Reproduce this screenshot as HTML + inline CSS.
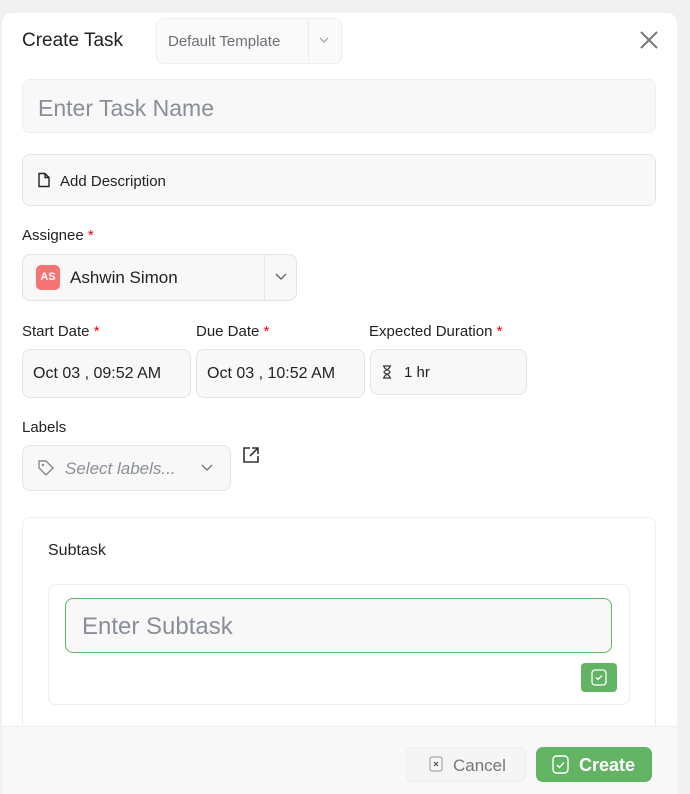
<!DOCTYPE html>
<html><head><style>
*{box-sizing:border-box;margin:0;padding:0}
html,body{width:690px;height:794px;overflow:hidden}
body{background:#f1f1f1;font-family:"Liberation Sans",sans-serif;position:relative;color:#222}
.m{position:absolute;left:2px;top:13px;width:675px;height:781px;background:#fff;border-radius:10px 10px 0 0;overflow:hidden}
.a{position:absolute}
.box{position:absolute;background:#f8f8f8;border:1px solid #e4e4e4;border-radius:8px}
.lbl{position:absolute;font-size:15px;color:#222}
.st{color:#e00}
</style></head><body>
<div class="m">
<div class="a" style="left:20px;top:17px;font-size:19px;color:#222">Create Task</div>
<div class="box" style="left:154px;top:5px;width:186px;height:46px;background:#fafafa;border-color:#eee"></div>
<div class="a" style="left:166px;top:20px;font-size:15px;color:#6b6f78">Default Template</div>
<div class="a" style="left:306px;top:6px;width:1px;height:44px;background:#eee"></div>
<svg class="a" style="left:316px;top:22px" width="12" height="10"><path d="M2 3l4 4 4-4" stroke="#aaa" fill="none" stroke-width="1.3"/></svg>
<svg class="a" style="left:637px;top:17px" width="20" height="20"><path d="M2 2l16 16M18 2L2 18" stroke="#777" stroke-width="2"/></svg>
<div class="box" style="left:20px;top:66px;width:634px;height:54px;border-color:#eee"></div>
<div class="a" style="left:36px;top:82px;font-size:23px;color:#8a8e98">Enter Task Name</div>
<div class="box" style="left:20px;top:141px;width:634px;height:52px"></div>
<svg class="a" style="left:35px;top:159px" width="14" height="16"><path d="M2 1.5h6l4 4v9H2z M8 1.5v4h4" stroke="#222" fill="none" stroke-width="1.4" stroke-linejoin="round"/></svg>
<div class="a" style="left:58px;top:160px;font-size:15px">Add Description</div>
<div class="lbl" style="left:20px;top:214px">Assignee <span class="st">*</span></div>
<div class="box" style="left:20px;top:241px;width:275px;height:47px"></div>
<div class="a" style="left:262px;top:242px;width:1px;height:45px;background:#e6e6e6"></div>
<div class="a" style="left:34px;top:252px;width:24px;height:25px;background:#f47373;border-radius:5px;color:#fff;font-size:11px;font-weight:bold;text-align:center;line-height:25px">AS</div>
<div class="a" style="left:68px;top:255px;font-size:17px">Ashwin Simon</div>
<svg class="a" style="left:272px;top:259px" width="14" height="10"><path d="M2 2l5 5 5-5" stroke="#666" fill="none" stroke-width="1.4"/></svg>
<div class="lbl" style="left:20px;top:310px">Start Date <span class="st">*</span></div>
<div class="lbl" style="left:194px;top:310px">Due Date <span class="st">*</span></div>
<div class="lbl" style="left:367px;top:310px">Expected Duration <span class="st">*</span></div>
<div class="box" style="left:20px;top:336px;width:169px;height:49px"></div>
<div class="box" style="left:194px;top:336px;width:169px;height:49px"></div>
<div class="box" style="left:368px;top:336px;width:157px;height:46px"></div>
<div class="a" style="left:31px;top:352px;font-size:16px">Oct 03 , 09:52 AM</div>
<div class="a" style="left:205px;top:352px;font-size:16px">Oct 03 , 10:52 AM</div>
<svg class="a" style="left:380px;top:352px" width="10" height="14"><path d="M1 1h8M1 13h8M2 1c0 4 6 4 6 6s-6 2-6 6M8 1c0 4-6 4-6 6s6 2 6 6" stroke="#333" fill="none" stroke-width="1.2"/></svg>
<div class="a" style="left:402px;top:351px;font-size:15px">1 hr</div>
<div class="lbl" style="left:20px;top:406px">Labels</div>
<div class="box" style="left:20px;top:432px;width:209px;height:46px"></div>
<svg class="a" style="left:35px;top:446px" width="18" height="18"><path d="M2 2h7l7 7-7 7-7-7z" stroke="#888" fill="none" stroke-width="1.4" stroke-linejoin="round"/><circle cx="6" cy="6" r="1.2" fill="#888"/></svg>
<div class="a" style="left:63px;top:446px;font-size:17px;font-style:italic;color:#8a8e98">Select labels...</div>
<svg class="a" style="left:199px;top:450px" width="12" height="10"><path d="M1 2l5 5 5-5" stroke="#777" fill="none" stroke-width="1.4"/></svg>
<svg class="a" style="left:240px;top:433px" width="18" height="18"><path d="M8 2H2v14h14v-6 M10 2h6v6 M16 2l-8 8" stroke="#333" fill="none" stroke-width="1.6"/></svg>
<div class="a" style="left:20px;top:504px;width:634px;height:300px;border:1px solid #eee;border-radius:8px;background:#fff"></div>
<div class="a" style="left:46px;top:529px;font-size:16px">Subtask</div>
<div class="a" style="left:46px;top:571px;width:582px;height:121px;border:1px solid #eee;border-radius:8px"></div>
<div class="box" style="left:63px;top:585px;width:547px;height:55px;border-color:#5cb85c"></div>
<div class="a" style="left:80px;top:600px;font-size:24px;color:#8a8e98">Enter Subtask</div>
<div class="a" style="left:579px;top:650px;width:36px;height:29px;background:#62b363;border-radius:4px"></div>
<svg class="a" style="left:589px;top:656px" width="16" height="17"><rect x="1" y="1" width="14" height="15" rx="3" stroke="#fff" fill="none" stroke-width="1.3"/><path d="M5 8.5l2 2 4-4" stroke="#fff" fill="none" stroke-width="1.3"/></svg>
<div class="a" style="left:0;top:713px;width:675px;height:90px;background:#f8f8f8;border-top:1px solid #eee"></div>
<div class="a" style="left:404px;top:734px;width:120px;height:35px;border:1px solid #eee;border-radius:6px;background:#f5f5f5"></div>
<svg class="a" style="left:427px;top:743px" width="14" height="16"><rect x="1" y="1" width="12" height="14" rx="2" stroke="#999" fill="none"/><path d="M5 6l4 4M9 6l-4 4" stroke="#555" stroke-width="1.2"/></svg>
<div class="a" style="left:451px;top:743px;font-size:17px;color:#777">Cancel</div>
<div class="a" style="left:534px;top:734px;width:116px;height:35px;border-radius:7px;background:#62b363"></div>
<svg class="a" style="left:550px;top:742px" width="17" height="19"><rect x="1" y="1" width="15" height="17" rx="3.5" stroke="#fff" fill="none" stroke-width="1.4"/><path d="M5 10l2.5 2.5 4.5-5" stroke="#fff" fill="none" stroke-width="1.4"/></svg>
<div class="a" style="left:577px;top:742px;font-size:18px;color:#fff;font-weight:bold">Create</div>
</div>
</body></html>
